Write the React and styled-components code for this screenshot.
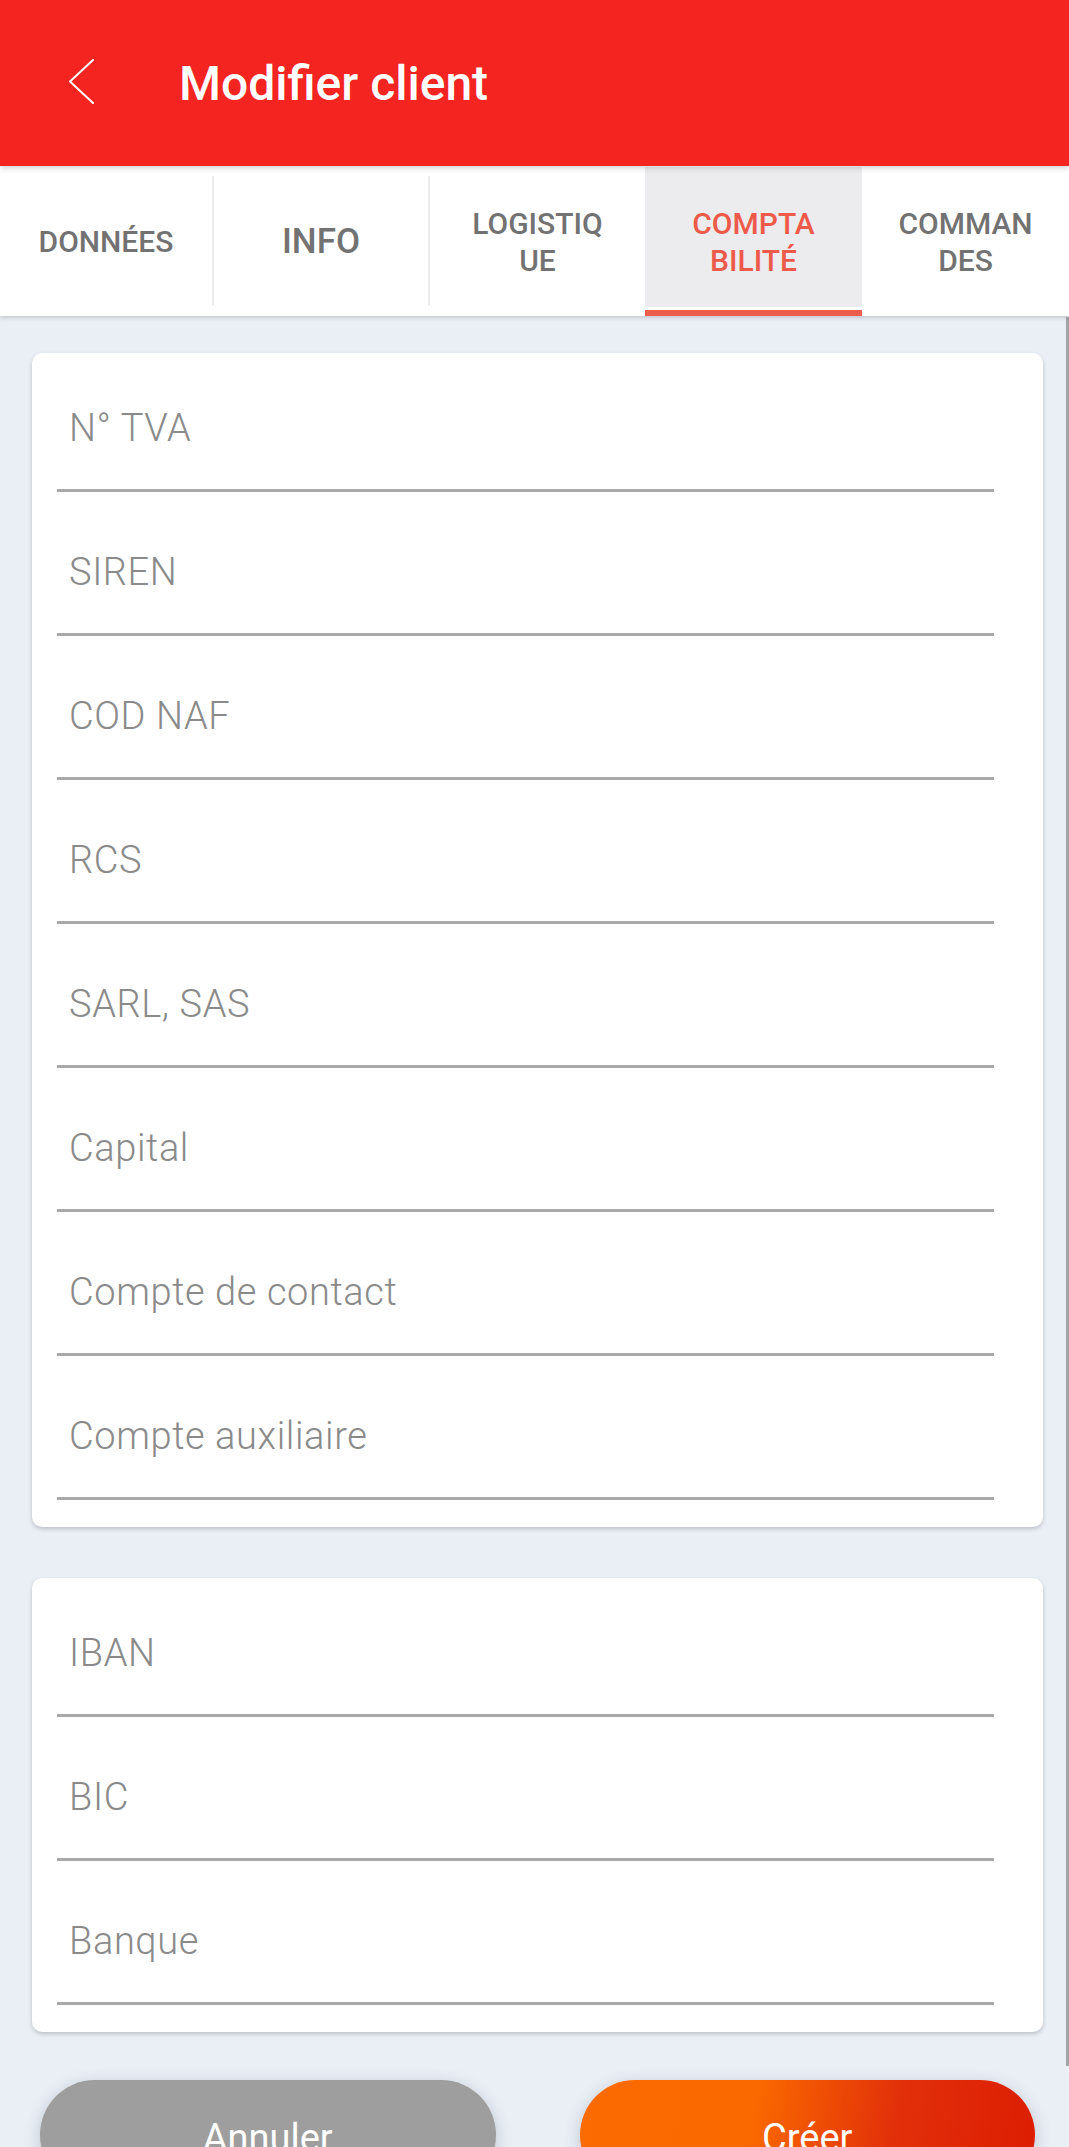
import React from "react";
import styled, { createGlobalStyle } from "styled-components";

const GlobalStyle = createGlobalStyle`
  html, body {
    margin: 0;
    padding: 0;
    background: #eaeff6;
    font-family: Roboto, "Liberation Sans", sans-serif;
  }
  * {
    box-sizing: border-box;
  }
`;

const TABS = [
  { label: "DONNÉES", width: "212px", size: 30, divider: true },
  { label: "INFO", width: "214px", size: 35, divider: true },
  { label: ["LOGISTIQ", "UE"], width: "215px", size: 30 },
  { label: ["COMPTA", "BILITÉ"], width: "217px", size: 30, active: true },
  { label: ["COMMAN", "DES"], size: 30 },
];

const COMPANY_FIELDS = [
  "N° TVA",
  "SIREN",
  "COD NAF",
  "RCS",
  "SARL, SAS",
  "Capital",
  "Compte de contact",
  "Compte auxiliaire",
];

const BANK_FIELDS = ["IBAN", "BIC", "Banque"];

const BackIcon = () => (
  <svg width="26" height="45" viewBox="0 0 26 45" fill="none">
    <polyline
      points="24,1 1,22.5 24,44"
      stroke="#ffffff"
      strokeWidth="2"
      strokeLinecap="round"
      strokeLinejoin="round"
    />
  </svg>
);

const App = () => {
  return (
    <>
      <GlobalStyle />
      <Screen>
        <Header>
          <BackBtn>
            <BackIcon />
          </BackBtn>
          <Title>Modifier client</Title>
        </Header>
        <TabBar>
          {TABS.map((tab, i) => (
            <React.Fragment key={i}>
              <Tab $width={tab.width}>
                <TabFace $active={tab.active} $size={tab.size}>
                  {Array.isArray(tab.label)
                    ? tab.label.map((line) => <span key={line}>{line}</span>)
                    : tab.label}
                </TabFace>
                <Indicator $active={tab.active} />
              </Tab>
              {tab.divider && <Divider />}
            </React.Fragment>
          ))}
        </TabBar>
        <Content>
          <Card>
            {COMPANY_FIELDS.map((f) => (
              <Field key={f}>
                <Input placeholder={f} />
              </Field>
            ))}
          </Card>
          <Card>
            {BANK_FIELDS.map((f) => (
              <Field key={f}>
                <Input placeholder={f} />
              </Field>
            ))}
          </Card>
          <Actions>
            <ActionBtn>Annuler</ActionBtn>
            <ActionBtn $primary>Créer</ActionBtn>
          </Actions>
          <ScrollThumb />
        </Content>
      </Screen>
    </>
  );
};

const Screen = styled.div`
  height: 100vh;
  overflow: hidden;
  display: flex;
  flex-direction: column;
  background: #eaeff6;
`;

const Header = styled.header`
  height: 166px;
  flex-shrink: 0;
  display: flex;
  align-items: center;
  padding-left: 69px;
  background: #f42421;
  position: relative;
  z-index: 2;
  box-shadow: 0 2px 6px rgba(0, 0, 0, 0.18);
`;

const BackBtn = styled.div`
  display: flex;
  align-items: center;
  height: 45px;
  margin-top: -3px;
`;

const Title = styled.h1`
  margin: 0 0 0 84px;
  color: #ffffff;
  font-family: Roboto, "Liberation Sans", sans-serif;
  font-weight: 500;
  font-size: 48px;
`;

const TabBar = styled.nav`
  height: 150px;
  flex-shrink: 0;
  display: flex;
  background: #ffffff;
  position: relative;
  z-index: 1;
  box-shadow: 0 2px 4px rgba(0, 0, 0, 0.16);
`;

const Tab = styled.div`
  width: ${(p) => p.$width || "auto"};
  flex: ${(p) => (p.$width ? "none" : "1")};
  display: flex;
  flex-direction: column;
`;

const TabFace = styled.div`
  flex: 1;
  margin-top: 1px;
  display: flex;
  flex-direction: column;
  align-items: center;
  justify-content: center;
  padding-top: 9px;
  background: ${(p) => (p.$active ? "#ececee" : "transparent")};
  color: ${(p) => (p.$active ? "#ee5a49" : "#727272")};
  font-family: Roboto, "Liberation Sans", sans-serif;
  font-weight: 500;
  font-size: ${(p) => p.$size}px;
  line-height: 37px;
  text-align: center;
`;

const Indicator = styled.div`
  height: 6px;
  margin-top: 3px;
  background: ${(p) => (p.$active ? "#ee5c4b" : "transparent")};
`;

const Divider = styled.div`
  width: 2px;
  margin: 10px 0;
  background: #ececec;
`;

const Content = styled.main`
  flex: 1;
  position: relative;
  padding: 37px 26px 0 32px;
  display: flex;
  flex-direction: column;
  gap: 51px;
`;

const Card = styled.section`
  background: #ffffff;
  border-radius: 10px;
  padding: 0 49px 27px 25px;
  box-shadow: 0 2px 4px rgba(0, 0, 0, 0.2);
`;

const Field = styled.label`
  display: block;
  height: 139px;
  padding-top: 52px;
  border-bottom: 3px solid #a9a9a9;
  & + & {
    margin-top: 5px;
  }
`;

const Input = styled.input`
  display: block;
  width: 100%;
  height: 45px;
  padding: 0 0 0 12px;
  border: none;
  outline: none;
  background: transparent;
  font-family: Roboto, "Liberation Sans", sans-serif;
  font-weight: 300;
  font-size: 38px;
  letter-spacing: 0.6px;
  color: #555555;
  &::placeholder {
    color: #8a8a8a;
    opacity: 1;
  }
`;

const Actions = styled.div`
  display: flex;
  justify-content: space-between;
  margin: -3px 8px 0 8px;
  gap: 84px;
`;

const ActionBtn = styled.button`
  flex: 1;
  height: 110px;
  padding-top: 6px;
  border: none;
  border-radius: 55px;
  color: #ffffff;
  font-family: Roboto, "Liberation Sans", sans-serif;
  font-weight: 400;
  font-size: 38px;
  background: ${(p) =>
    p.$primary
      ? "linear-gradient(100deg, #fb6b00 0%, #fa6800 38%, #e2300a 68%, #dc1c02 100%)"
      : "#9e9e9e"};
  box-shadow: 0 4px 16px rgba(60, 70, 90, 0.25);
`;

const ScrollThumb = styled.div`
  position: absolute;
  top: 1px;
  right: 0;
  width: 3px;
  height: 1749px;
  background: #a4a4a4;
`;

export default App;
